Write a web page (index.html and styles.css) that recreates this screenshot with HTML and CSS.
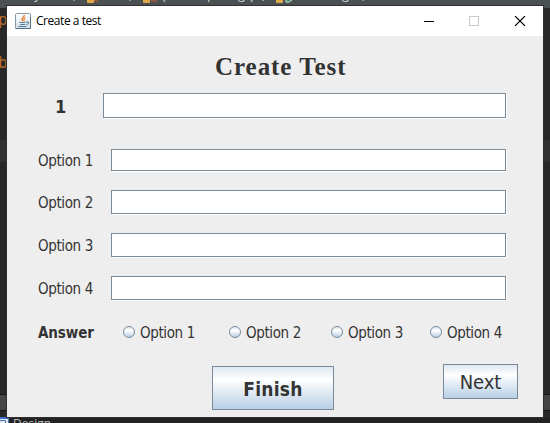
FILE: index.html
```html
<!DOCTYPE html>
<html lang="en">
<head>
<meta charset="utf-8">
<title>Create a test</title>
<link rel="stylesheet" href="styles.css">
</head>
<body>
<div class="desktop">
  <div class="top-strip">
    <svg width="550" height="5" viewBox="0 0 550 5">
      <g class="strip-text">
        <text x="34" y="-1">y</text><text x="73" y="-1">,</text><text x="129" y="-1">,</text><text x="162" y="0">(</text>
        <text x="207" y="-1">p</text><text x="238" y="-1">g</text><text x="250" y="0">)</text><text x="262" y="-1">,</text><text x="342" y="-1">g</text><text x="362" y="-1">,</text>
      </g>
      <g fill="#dfa64a"><rect x="87" y="-3" width="7" height="6" rx="1"/><rect x="143" y="-3" width="7" height="6" rx="1"/><rect x="276" y="-3" width="7" height="6" rx="1"/></g>
      <g fill="#8b5741"><rect x="94" y="-1" width="4" height="3"/><rect x="151" y="-1" width="6" height="3"/></g>
      <path d="M286 0V2H289L292 0" fill="#378760" stroke="#d4e3da"/>
    </svg>
  </div>
  <span class="code code-p">p</span><span class="code code-b">b</span>
  <div class="line-band"></div>
  <div class="status-band"></div>
  <div class="tab"><svg width="9" height="6" viewBox="0 0 9 6"><path d="M0 0H9V6H0Z" fill="#dce8f7"/><path d="M0 0H9V2H0Z" fill="#3d6fd0"/><path d="M0 3.5H5.5V6M8.5 1V6" fill="none" stroke="#547da5"/></svg><span>Design</span></div>
</div>
<main class="window">
  <header class="titlebar">
    <svg class="java" width="16" height="16" viewBox="0 0 16 16">
      <defs><linearGradient id="tile" x2="0" y2="1"><stop stop-color="#fff"/><stop offset="1" stop-color="#d2dfe8"/></linearGradient></defs>
      <rect x=".5" y=".5" width="15" height="15" rx="1" fill="url(#tile)" stroke="#8298a8"/>
      <path d="M.5 15.5H15.5V4" fill="none" stroke="#526f86"/>
      <path d="M9.5 2C9 4.5 5.5 5 7.7 8.2M10.5 4.5C7.5 6 9.8 6.6 8.8 8.2" fill="none" stroke="#e98435" stroke-width="1.3"/>
      <path d="M4.5 9.5H10.5M5 11.5H10M3.5 13.5H11.5M11 9C14.5 8 14 11 11.2 11.8" fill="none" stroke="#587b96" stroke-width="1.1"/>
    </svg>
    <span class="caption">Create a test</span>
    <svg class="controls" width="102" height="10" viewBox="0 0 102 10" shape-rendering="crispEdges">
      <path d="M0 5.5H10" stroke="#000"/><rect x="45.5" y=".5" width="9" height="9" fill="none" stroke="#c9c9c9"/>
      <path d="M91 0L101 10M101 0L91 10" stroke="#000" shape-rendering="auto" stroke-width="1.15"/>
    </svg>
  </header>
  <h1>Create Test</h1>
  <div class="question"><span class="number">1</span><div class="field"></div></div>
  <div class="options">
    <div class="option first"><span class="label">Option 1</span><div class="field"></div></div>
    <div class="option"><span class="label">Option 2</span><div class="field"></div></div>
    <div class="option"><span class="label">Option 3</span><div class="field"></div></div>
    <div class="option"><span class="label">Option 4</span><div class="field"></div></div>
  </div>
  <div class="answers">
    <strong>Answer</strong>
    <div class="choice"><i></i><span class="label">Option 1</span></div>
    <div class="choice"><i></i><span class="label">Option 2</span></div>
    <div class="choice"><i></i><span class="label">Option 3</span></div>
    <div class="choice"><i></i><span class="label">Option 4</span></div>
  </div>
  <div class="actions"><button class="finish">Finish</button><button class="next">Next</button></div>
</main>
</body>
</html>
```
FILE: styles.css
```css
* { box-sizing: border-box; }
body {
  margin: 0;
  width: 550px;
  height: 423px;
  overflow: hidden;
  padding: 6px 7px;
  background: #262626;
  color: #333;
  font-family: "DejaVu Sans Condensed", "DejaVu Sans", sans-serif;
}
.desktop {
  position: absolute;
  inset: 0;
  overflow: hidden;
  background: #282828;
}
.top-strip { height: 8px; background: #4b5053; }
.top-strip svg { display: block; }
.strip-text { fill: #d0d8dc; font: 13px "Open Sans", sans-serif; }
.code { position: absolute; color: #b66b2b; font: 16px/20px "DejaVu Sans Mono", monospace; }
.code-p { left: -2px; top: 10px; }
.code-b { left: -2px; top: 53px; }
.line-band { position: absolute; top: 140px; width: 100%; height: 22px; background: #313131; }
.status-band {
  position: absolute;
  top: 394px;
  width: 100%;
  height: 17px;
  background: #454545;
  border: solid #151515;
  border-width: 1px 0;
}
.tab {
  position: absolute;
  top: 417px;
  width: 100%;
  height: 6px;
  display: flex;
  gap: 4px;
  background: #222;
  overflow: hidden;
  color: #bbb;
  font: 12px/14px "Open Sans", sans-serif;
}
.window {
  position: relative;
  width: 536px;
  height: 411px;
  background: #eee;
  box-shadow: 0 0 0 1px #302e30;
}
.titlebar {
  height: 30px;
  display: flex;
  align-items: center;
  padding-left: 8px;
  background: #fff;
  color: #000;
}
.caption { margin: 0 0 1px 5px; width: 80px; font: 12px/16px "Open Sans", sans-serif; letter-spacing: -.45px; white-space: nowrap; }
.controls { margin: 0 17px 1px auto; }
h1 {
  margin: 16px 0 0 208px;
  height: 29px;
  font: bold 25px/29px "Liberation Serif", serif;
  letter-spacing: .95px;
  white-space: nowrap;
}
.question { display: flex; margin-top: 12px; height: 25px; }
.number { width: 96px; padding-left: 48px; font-size: 18px; font-weight: bold; line-height: 28px; }
.field {
  width: 403px;
  height: 100%;
  background: #fff;
  border: 1px solid #7a8a99;
  box-shadow: 1px 1px 0 #fff;
}
.options { margin-top: 31px; display: grid; grid-template-rows: 22px 24px 24px 24px; row-gap: 19px; }
.option { display: flex; padding-left: 31px; }
.option .label { width: 73px; line-height: 27px; }
.option.first .label { line-height: 25px; }
.option .field { width: 395px; }
.label { font-size: 15px; letter-spacing: -.38px; white-space: nowrap; }
.answers { display: flex; height: 20px; margin-top: 22px; padding-left: 31px; align-items: center; }
.answers strong { width: 85px; font-size: 15px; letter-spacing: -.1px; line-height: 20px; padding-top: 2px; }
.choice { display: flex; width: 106px; align-items: center; gap: 5px; }
.choice:nth-child(3) { width: 102px; }
.choice:nth-child(4) { width: 99px; }
.choice:nth-child(5) { width: 80px; }
.choice i {
  width: 12px;
  height: 12px;
  border: 1px solid #7a8a99;
  border-radius: 50%;
  background: linear-gradient(#dde8f3, #fff 35%, #b8cfe5);
}
.choice .label { line-height: 20px; padding-top: 2px; }
.actions { display: flex; margin: 22px 0 0 205px; align-items: flex-start; justify-content: space-between; width: 306px; }
button {
  padding: 0;
  border: 1px solid #7a8a99;
  background: linear-gradient(#dde8f3, #fff 30%, #b8cfe5);
  color: #333;
  font-family: inherit;
}
.finish { width: 122px; height: 44px; margin-top: 2px; padding-top: 2px; font-size: 19px; font-weight: bold; letter-spacing: .25px; }
.next { width: 75px; height: 35px; font-size: 20px; letter-spacing: -.1px; }
```
